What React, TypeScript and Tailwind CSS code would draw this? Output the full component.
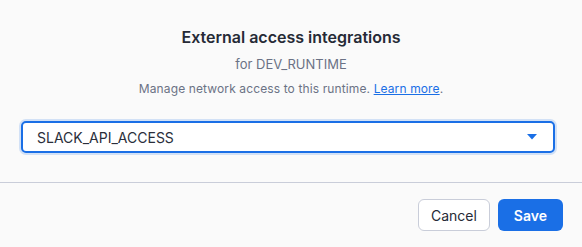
export default function App() {
  return (
    <div
      className="h-[247px] w-[582px] bg-[#fafafa] text-[#1f2330]"
      style={{ fontFamily: "Inter, 'Liberation Sans', sans-serif" }}
    >
      <div className="flex flex-col items-center pt-[26px]">
        <h2 className="text-[16px] font-semibold leading-[22px] text-[#262a36]">
          External access integrations
        </h2>
        <p className="mt-[8px] text-[13px] leading-[17px] text-[#6b7285]">for DEV_RUNTIME</p>
        <p className="mt-[8px] text-[12px] leading-[16px] tracking-[0.01em] text-[#6b7285]">
          Manage network access to this runtime.{" "}
          <a className="text-[#1a6fe6] underline">Learn more</a>.
        </p>
      </div>

      <div className="ml-[21px] mr-[27px] mt-[24px] flex h-[32px] items-center justify-between rounded-[5px] border-2 border-[#1a6fe6] bg-white px-[14px] shadow-[0_0_0_2px_rgba(26,111,230,0.18)]">
        <span className="text-[14px] text-[#2a2e3a]">SLACK_API_ACCESS</span>
        <svg width="10" height="6" viewBox="0 0 10 6" className="mr-[2px]">
          <path d="M0 0 L10 0 L5 5.5 Z" fill="#1a6fe6" />
        </svg>
      </div>

      <div className="mt-[29px] h-px w-full bg-[#c9cdd9]" />

      <div className="flex justify-end gap-[8px] pr-[19px] pt-[16px]">
        <button className="h-[32px] rounded-[6px] border border-[#c9cdd9] bg-white px-[12px] text-[14px] text-[#262a36]">
          Cancel
        </button>
        <button className="h-[32px] rounded-[6px] bg-[#1a6fe6] px-[16px] text-[14px] font-semibold text-white">
          Save
        </button>
      </div>
    </div>
  );
}
